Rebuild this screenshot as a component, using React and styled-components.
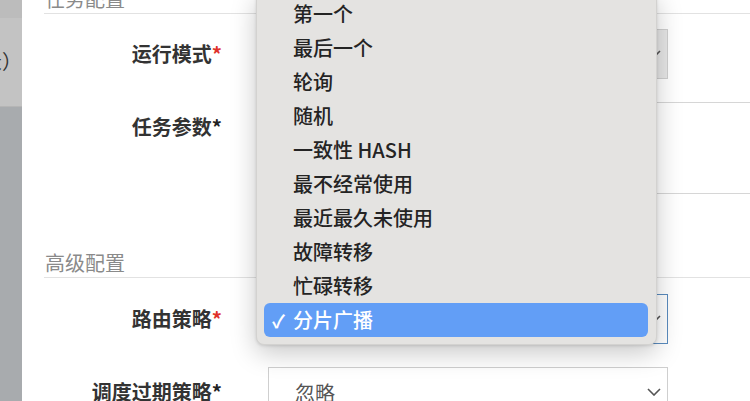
import React from "react";
import styled, { createGlobalStyle } from "styled-components";

const GlobalStyle = createGlobalStyle`
  html, body {
    margin: 0;
    padding: 0;
    background: #ffffff;
  }
  body {
    font-family: "Noto Sans CJK SC", "Noto Sans", sans-serif;
  }
`;

const Page = styled.div`
  position: relative;
  display: flex;
  width: 750px;
  height: 401px;
  overflow: hidden;
  background: #ffffff;
`;

const Backdrop = styled.div`
  display: flex;
  flex-direction: column;
  width: 22px;
  flex-shrink: 0;
  background: #a8abae;
`;

const BackdropTop = styled.div`
  display: flex;
  justify-content: flex-end;
  align-items: center;
  height: 107px;
  padding-bottom: 4px;
  box-sizing: border-box;
  overflow: hidden;
  white-space: nowrap;
  background: #c3c3c3;
  border-top: 18px solid #bcbcbc;
  border-bottom: 1px solid #b5b5b5;
  font-size: 20px;
  color: #333;
`;

const Modal = styled.div`
  flex: 1;
  display: flex;
  flex-direction: column;
  margin-top: -15px;
  padding-left: 22px;
  background: #ffffff;
`;

const SectionTitle = styled.div`
  height: 28px;
  line-height: 28px;
  padding-left: 1px;
  font-size: 20px;
  color: #8a8a8a;
  border-bottom: 1px solid #e2e2e2;
  margin-top: ${({ $gap }) => $gap || 0}px;
`;

const Row = styled.div`
  display: flex;
  align-items: flex-start;
  gap: 46px;
  margin-top: ${({ $gap }) => $gap || 0}px;
`;

const Label = styled.div`
  width: 178px;
  text-align: right;
  line-height: 50px;
  font-size: 20px;
  font-weight: 700;
  color: #333;
  white-space: nowrap;
`;

const Star = styled.span`
  color: ${({ $red }) => ($red ? "#e0312a" : "#222")};
`;

const SelectBox = styled.div`
  display: flex;
  align-items: center;
  justify-content: space-between;
  width: 400px;
  height: 50px;
  box-sizing: border-box;
  padding: 0 6px 0 26px;
  border: 1px solid ${({ $focus }) => ($focus ? "#5a8cbf" : "#cfcfcf")};
  background: ${({ $muted }) => ($muted ? "#e7e7e7" : "#ffffff")};
  font-size: 20px;
  color: #555;
`;

const TextArea = styled.div`
  width: 520px;
  height: 92px;
  box-sizing: border-box;
  border: 1px solid #d6d6d6;
  background: #ffffff;
`;

const Menu = styled.div`
  position: absolute;
  left: 256px;
  top: -9px;
  width: 401px;
  box-sizing: border-box;
  padding: 5px 8px 7px 7px;
  background: #e4e3e1;
  border: 1px solid #d3d2d0;
  border-radius: 8px;
  box-shadow: 0 8px 26px rgba(0, 0, 0, 0.22), 0 1px 3px rgba(0, 0, 0, 0.12);
`;

const Item = styled.div`
  position: relative;
  height: 34px;
  line-height: 34px;
  padding-left: 29px;
  border-radius: 6px;
  font-size: 20px;
  font-weight: 500;
  color: ${({ $active }) => ($active ? "#ffffff" : "#242424")};
  background: ${({ $active }) => ($active ? "#629ef6" : "transparent")};
`;

const Check = styled.span`
  position: absolute;
  left: 8px;
  top: 0;
  font-size: 18px;
  font-weight: 700;
`;

const Chevron = () => (
  <svg width="14" height="8" viewBox="0 0 14 8">
    <path d="M1 1 L7 7 L13 1" fill="none" stroke="#555" strokeWidth="1.6" />
  </svg>
);

const options = [
  "第一个",
  "最后一个",
  "轮询",
  "随机",
  "一致性 HASH",
  "最不经常使用",
  "最近最久未使用",
  "故障转移",
  "忙碌转移",
  "分片广播",
];

export default function App() {
  return (
    <>
      <GlobalStyle />
      <Page>
        <Backdrop>
          <BackdropTop>（日志记录）</BackdropTop>
        </Backdrop>
        <Modal>
          <SectionTitle>任务配置</SectionTitle>
          <Row $gap={15}>
            <Label>
              运行模式<Star $red>*</Star>
            </Label>
            <SelectBox $muted>
              <span />
              <Chevron />
            </SelectBox>
          </Row>
          <Row $gap={23}>
            <Label>
              任务参数<Star>*</Star>
            </Label>
            <TextArea />
          </Row>
          <SectionTitle $gap={55}>高级配置</SectionTitle>
          <Row $gap={16}>
            <Label>
              路由策略<Star $red>*</Star>
            </Label>
            <SelectBox $focus>
              <span />
              <Chevron />
            </SelectBox>
          </Row>
          <Row $gap={23}>
            <Label>
              调度过期策略<Star>*</Star>
            </Label>
            <SelectBox>
              <span>忽略</span>
              <Chevron />
            </SelectBox>
          </Row>
        </Modal>
        <Menu>
          {options.map((o) => (
            <Item key={o} $active={o === "分片广播"}>
              {o === "分片广播" && <Check>✓</Check>}
              {o}
            </Item>
          ))}
        </Menu>
      </Page>
    </>
  );
}
